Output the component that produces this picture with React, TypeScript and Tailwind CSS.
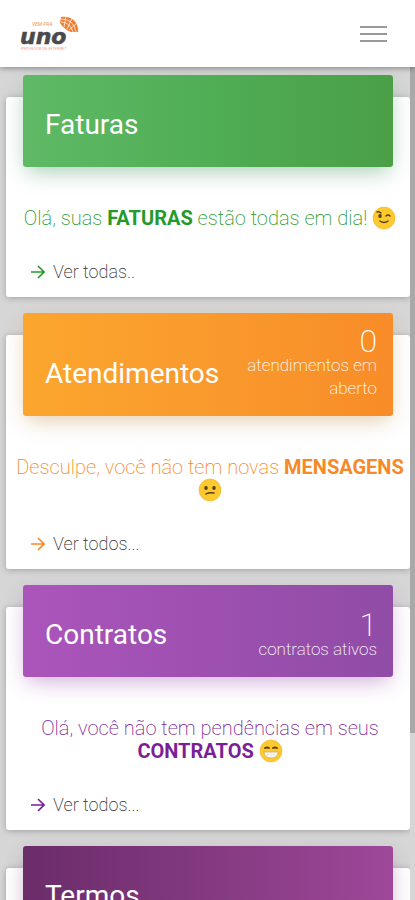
import React from "react";

type Tone = "green" | "orange" | "purple" | "plum";

const banners: Record<Tone, string> = {
  green: "from-[#5fb966] via-[#50ae55] to-[#4a9f47] shadow-[0_8px_20px_-4px_rgba(50,140,80,0.45)]",
  orange: "from-[#fca62e] via-[#f99a2d] to-[#f88c28] shadow-[0_8px_20px_-4px_rgba(190,140,70,0.45)]",
  purple: "from-[#ab55bb] via-[#9d50b0] to-[#904ca6] shadow-[0_8px_20px_-4px_rgba(150,70,170,0.45)]",
  plum: "from-[#6b2c6a] via-[#833a80] to-[#9f4899] shadow-[0_8px_20px_-4px_rgba(110,50,110,0.45)]",
};

const texts: Record<Tone, string> = {
  green: "text-[#259a2b]",
  orange: "text-[#f68a26]",
  purple: "text-[#7c1f96]",
  plum: "text-[#6b2c6a]",
};

function Logo() {
  return (
    <svg viewBox="0 0 60 36" className="h-9 w-[60px]" role="img" aria-label="Vem pra Uno">
      <text x="12" y="10" fontSize="5" fill="#f0925c" fontFamily="Roboto, sans-serif" fontStyle="italic">VEM PRA</text>
      <text x="0" y="28" fontSize="22" fontWeight="700" fontStyle="italic" fill="#4a4a4c" stroke="#4a4a4c" strokeWidth="0.6" fontFamily="DejaVu Sans, sans-serif">uno</text>
      <text x="1" y="34" fontSize="4" fill="#f0a884" fontFamily="Roboto, sans-serif">PROVEDOR DE INTERNET</text>
      <path d="M41 1C51-1 59 6 58 16L51 16C48 15 43 12 40 7Z" fill="#ee8034" />
      <g fill="none" stroke="#fff" strokeWidth="0.7">
        <path d="M41 3q13 0 15 13M41 6q9 0 12 10M46 0l-2 11M52 2l-5 11M57 7l-8 7" />
      </g>
    </svg>
  );
}

function Emoji({ mood, label }: { mood: "wink" | "sad" | "grin"; label: string }) {
  return (
    <svg viewBox="0 0 24 24" className="-mt-2 -mb-1 inline-block size-6 align-middle" role="img" aria-label={label}>
      <circle cx="12" cy="12" r="11" fill="#fdc92e" stroke="#f3b32a" strokeWidth="0.6" />
      {mood === "wink" && (
        <g fill="none" stroke="#54401c" strokeWidth="1.5" strokeLinecap="round">
          <path d="M5 6q2-1 4 1M14 10q2-2 4 0M8 15q4 3 8 0" />
          <ellipse cx="8" cy="10" rx="1" ry="1.2" fill="#54401c" />
        </g>
      )}
      {mood === "sad" && (
        <g fill="none" stroke="#54401c" strokeWidth="1.5" strokeLinecap="round">
          <ellipse cx="8" cy="10" rx="1" ry="1.2" fill="#54401c" />
          <ellipse cx="16" cy="10" rx="1" ry="1.2" fill="#54401c" />
          <path d="M8 16q3-2 8-1" />
        </g>
      )}
      {mood === "grin" && (
        <g fill="none" stroke="#54401c" strokeWidth="1.8" strokeLinecap="round">
          <path d="M6 9q2-1 4 0M14 9q2-1 4 0" />
          <path d="M5 13h14q0 6-7 6t-7-6z" fill="#fff" stroke="#d9a84a" strokeWidth="0.8" />
          <path d="M6 16h12M9 13v5M12 13v6M15 13v5" stroke="#d8d0c0" strokeWidth="0.5" />
        </g>
      )}
    </svg>
  );
}

interface CardProps {
  tone: Tone;
  title: string;
  count?: number;
  caption?: string;
  link: string;
  children?: React.ReactNode;
}

function Card({ tone, title, count, caption, link, children }: CardProps) {
  return (
    <section className="rounded-[3px] bg-white pb-[14px] shadow-[0_1px_6px_rgba(0,0,0,0.25)]">
      <div className={`-mt-[22px] mx-[17px] flex min-h-[92px] items-end justify-between rounded-[3px] bg-linear-to-r pr-4 pl-[22px] text-white ${banners[tone]}`}>
        <h2 className="mb-[26px] text-[28px] leading-8">{title}</h2>
        {caption && (
          <p className="flex w-[140px] flex-col py-4 text-right text-[17px] leading-[23px] font-extralight">
            <span className="text-[32px] leading-[25px]">{count}</span>
            {caption}
          </p>
        )}
      </div>
      <p className={`mt-10 pr-1 pl-2 text-center text-[20px] leading-[23px] font-extralight ${texts[tone]}`}>{children}</p>
      <a href="#" className="mt-[30px] ml-[25px] flex w-fit items-center gap-2 text-[18px] leading-[23px] font-extralight text-[#333]">
        <svg viewBox="0 0 14 14" className={`size-[14px] ${texts[tone]}`} fill="none" stroke="currentColor" strokeWidth="1.6" aria-hidden="true">
          <path d="M0 7h13M7 1l6 6-6 6" />
        </svg>
        {link}
      </a>
    </section>
  );
}

export default function App() {
  return (
    <div className="flex h-screen flex-col overflow-hidden bg-[#d6d6d6] font-[Roboto,sans-serif]">
      <header className="z-10 flex h-[67px] shrink-0 items-center justify-between bg-white pr-7 pl-5 shadow-[0_1px_6px_rgba(0,0,0,0.4)]">
        <Logo />
        <button type="button" aria-label="Menu" className="flex w-[27px] flex-col gap-[5px]">
          <span className="h-[2px] bg-[#999]" />
          <span className="h-[2px] bg-[#999]" />
          <span className="h-[2px] bg-[#999]" />
        </button>
      </header>
      <div className="flex min-h-0 flex-1">
        <main className="flex min-w-0 flex-1 flex-col gap-[38px] overflow-hidden pt-[30px] pl-[6px] *:shrink-0">
          <Card tone="green" title="Faturas" link="Ver todas..">
            Olá, suas <b className="font-bold">FATURAS</b> estão todas em dia! <Emoji mood="wink" label="piscando" />
          </Card>
          <Card tone="orange" title="Atendimentos" count={0} caption="atendimentos em aberto" link="Ver todos...">
            Desculpe, você não tem novas <b className="font-bold">MENSAGENS</b> <Emoji mood="sad" label="confuso" />
          </Card>
          <Card tone="purple" title="Contratos" count={1} caption="contratos ativos" link="Ver todos...">
            Olá, você não tem pendências em seus <b className="font-bold">CONTRATOS</b> <Emoji mood="grin" label="sorrindo" />
          </Card>
          <Card tone="plum" title="Termos" link="Ver todos..." />
        </main>
        <div className="w-[5px] shrink-0" aria-hidden="true">
          <div className="h-4/5 bg-[#a9a9a9]" />
        </div>
      </div>
    </div>
  );
}
